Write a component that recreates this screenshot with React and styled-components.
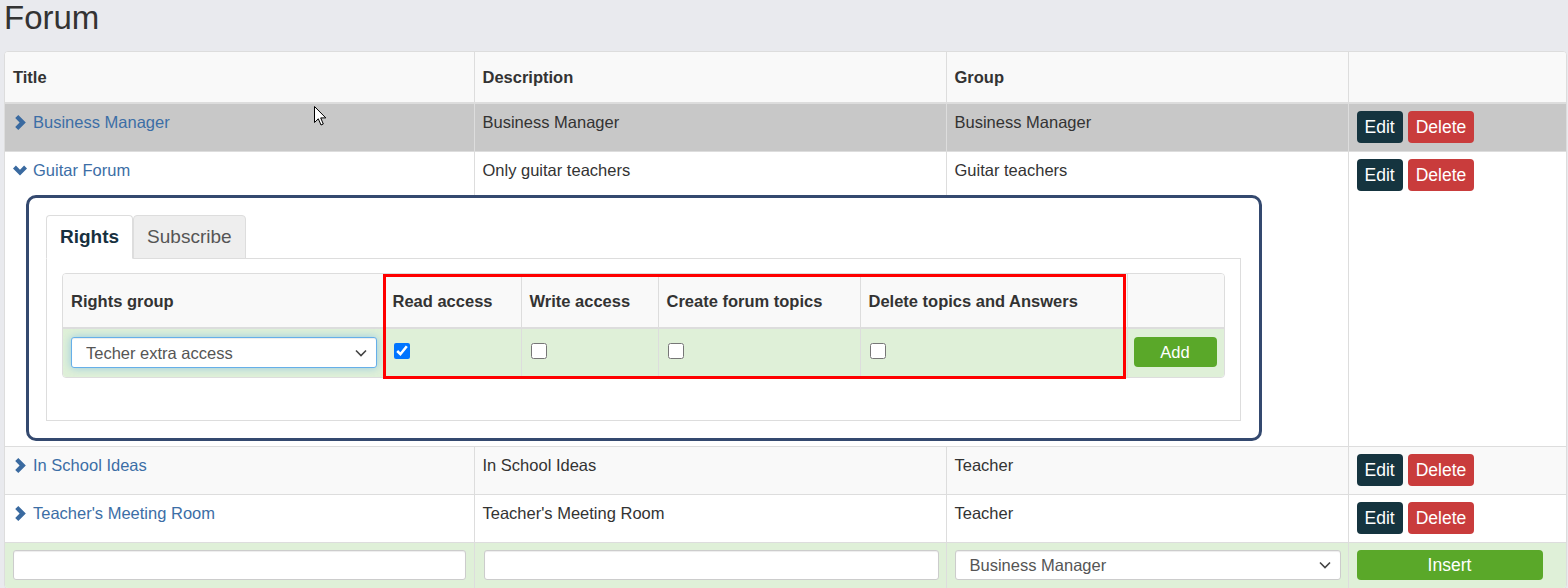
import React from "react";
import styled, { createGlobalStyle } from "styled-components";

const GlobalStyle = createGlobalStyle`
  body {
    margin: 0;
    background: #e9eaee;
    font-family: "Liberation Sans", Arial, sans-serif;
    font-size: 16.5px;
    color: #333;
  }
`;

const Page = styled.div`
  position: relative;
  padding: 0 1px 0 4px;
  height: 588px;
  overflow: hidden;
`;

const Heading = styled.h1`
  margin: 0 0 15px;
  font-size: 33px;
  line-height: 36px;
  font-weight: normal;
  color: #333;
`;

const TableWrap = styled.div`
  border: 1px solid #ddd;
  border-radius: 4px;
  overflow: hidden;
  background: #fff;
`;

const Table = styled.table`
  width: 100%;
  border-collapse: collapse;
  border-style: hidden;
  table-layout: fixed;
`;

const Th = styled.th`
  text-align: left;
  font-weight: bold;
  padding: ${(p) => p.$pad || "14px 8px"};
  line-height: 22px;
  background: #f9f9f9;
  border: 1px solid #ddd;
  border-bottom-width: 2px;
`;

const Row = styled.tr`
  background: ${(p) => p.$bg || "#fff"};
`;

const Td = styled.td`
  padding: ${(p) => p.$pad || "7px 8px 8px"};
  line-height: 22px;
  vertical-align: top;
  border: 1px solid #ddd;
  ${(p) => p.$openTop && "border-top-style: hidden;"}
  ${(p) => p.$openBottom && "border-bottom-style: hidden;"}
`;

const TitleLink = styled.a`
  display: flex;
  align-items: center;
  gap: 6px;
  color: #3c6ea6;
  text-decoration: none;
`;

const IconBox = styled.span`
  width: 14px;
  display: flex;
  justify-content: center;
  align-items: center;
`;

const Actions = styled.div`
  display: flex;
  gap: 5px;
`;

const Btn = styled.button`
  height: ${(p) => p.$h || 32}px;
  padding: 0 8px;
  border: none;
  border-radius: 4px;
  color: #fff;
  font-family: inherit;
  font-size: ${(p) => p.$fs || 17.5}px;
  background: ${(p) => p.$bg};
  width: ${(p) => (p.$w ? `${p.$w}px` : "auto")};
  cursor: pointer;
`;

const DetailBox = styled.div`
  border: 3px solid #34496f;
  border-radius: 10px;
  padding: 17px 18px 17px 17px;
`;

const TabBar = styled.div`
  display: flex;
`;

const Tab = styled.div`
  position: relative;
  z-index: 1;
  padding: 10px 13px;
  line-height: 22px;
  font-size: 19px;
  margin-bottom: -1px;
  border: 1px solid #ddd;
  border-radius: 4px 4px 0 0;
  ${(p) =>
    p.$active
      ? "background: #fff; border-bottom-color: #fff; font-weight: bold; color: #17303f;"
      : "background: #eee; color: #555;"}
`;

const TabPanel = styled.div`
  border: 1px solid #ddd;
  padding: 14px 15px 42px;
`;

const RightsArea = styled.div`
  position: relative;
`;

const RightsWrap = styled.div`
  border: 1px solid #ddd;
  border-radius: 4px;
  overflow: hidden;
`;

const Highlight = styled.div`
  position: absolute;
  left: 321px;
  top: 1px;
  width: 743px;
  height: 105px;
  border: 3px solid #f00;
  box-sizing: border-box;
  pointer-events: none;
`;

const Check = styled.input.attrs({ type: "checkbox" })`
  width: 16px;
  height: 16px;
  margin: 6px 0 0 1px;
`;

const SelectWrap = styled.div`
  position: relative;
  width: ${(p) => p.$w}px;
`;

const Select = styled.select`
  appearance: none;
  width: 100%;
  height: ${(p) => p.$h || 30}px;
  padding: 0 14px;
  font-family: inherit;
  font-size: 16.5px;
  color: #555;
  background: #fff;
  border: 1px solid ${(p) => (p.$focus ? "#66afe9" : "#ccc")};
  border-radius: 3px;
  box-shadow: ${(p) =>
    p.$focus
      ? "inset 0 1px 1px rgba(0,0,0,.075), 0 0 8px rgba(102,175,233,.6)"
      : "inset 0 1px 1px rgba(0,0,0,.075)"};
  outline: none;
`;

const Caret = styled.svg`
  position: absolute;
  right: 10px;
  top: 50%;
  transform: translateY(-50%);
  pointer-events: none;
`;

const TextInput = styled.input`
  box-sizing: border-box;
  width: 100%;
  height: 30px;
  border: 1px solid #ccc;
  border-radius: 3px;
  box-shadow: inset 0 1px 1px rgba(0, 0, 0, 0.075);
  background: #fff;
`;

const Cursor = styled.svg`
  position: absolute;
  left: 314px;
  top: 106px;
`;

const ChevronRight = () => (
  <svg width="11" height="15" viewBox="0 0 11 15">
    <path d="M3.3 0 L10.8 7.5 L3.3 15 L0.2 11.9 L4.6 7.5 L0.2 3.1 Z" fill="#3a6aa0" />
  </svg>
);

const ChevronDown = () => (
  <svg width="15" height="11" viewBox="0 0 15 11">
    <path d="M0 3.3 L3.1 0.2 L7.5 4.6 L11.9 0.2 L15 3.3 L7.5 10.8 Z" fill="#3a6aa0" />
  </svg>
);

const SelectBox = ({ value, w, h, focus }) => (
  <SelectWrap $w={w}>
    <Select $h={h} $focus={focus} defaultValue={value}>
      <option>{value}</option>
    </Select>
    <Caret width="12" height="8" viewBox="0 0 12 8">
      <path d="M1 1.5 L6 6.5 L11 1.5" fill="none" stroke="#444" strokeWidth="1.6" />
    </Caret>
  </SelectWrap>
);

const EditDelete = () => (
  <Actions>
    <Btn $bg="#15343f">Edit</Btn>
    <Btn $bg="#c93c3c">Delete</Btn>
  </Actions>
);

const forums = [
  { title: "Business Manager", desc: "Business Manager", group: "Business Manager", bg: "#c8c8c8" },
  { title: "Guitar Forum", desc: "Only guitar teachers", group: "Guitar teachers", open: true },
  { title: "In School Ideas", desc: "In School Ideas", group: "Teacher", bg: "#f9f9f9" },
  { title: "Teacher's Meeting Room", desc: "Teacher's Meeting Room", group: "Teacher" },
];

const rightsCols = ["Rights group", "Read access", "Write access", "Create forum topics", "Delete topics and Answers", ""];

function RightsPanel() {
  return (
    <DetailBox>
      <TabBar>
        <Tab $active>Rights</Tab>
        <Tab>Subscribe</Tab>
      </TabBar>
      <TabPanel>
        <RightsArea>
          <RightsWrap>
            <Table>
              <colgroup>
                <col style={{ width: 321 }} />
                <col style={{ width: 137 }} />
                <col style={{ width: 137 }} />
                <col style={{ width: 202 }} />
                <col style={{ width: 267 }} />
                <col />
              </colgroup>
              <thead>
                <tr>
                  {rightsCols.map((c, i) => (
                    <Th key={i} $pad="16px 8px 15px">{c}</Th>
                  ))}
                </tr>
              </thead>
              <tbody>
                <Row $bg="#dff0d8">
                  <Td $pad="8px 6px 9px 8px">
                    <SelectBox value="Techer extra access" w={306} h={31} focus />
                  </Td>
                  <Td $pad="8px"><Check defaultChecked /></Td>
                  <Td $pad="8px"><Check /></Td>
                  <Td $pad="8px"><Check /></Td>
                  <Td $pad="8px"><Check /></Td>
                  <Td $pad="8px 8px 9px 6px">
                    <Btn $bg="#5aa829" $h={30} $w={83} $fs={16.5}>Add</Btn>
                  </Td>
                </Row>
              </tbody>
            </Table>
          </RightsWrap>
          <Highlight />
        </RightsArea>
      </TabPanel>
    </DetailBox>
  );
}

export default function App() {
  return (
    <>
      <GlobalStyle />
      <Page>
        <Heading>Forum</Heading>
        <TableWrap>
          <Table>
            <colgroup>
              <col style={{ width: 469 }} />
              <col style={{ width: 472 }} />
              <col style={{ width: 402 }} />
              <col />
            </colgroup>
            <thead>
              <tr>
                <Th>Title</Th>
                <Th>Description</Th>
                <Th>Group</Th>
                <Th />
              </tr>
            </thead>
            <tbody>
              {forums.map((f) => (
                <React.Fragment key={f.title}>
                  <Row $bg={f.bg}>
                    <Td $pad={f.open ? "7px 8px 14px" : undefined} $openBottom={f.open}>
                      <TitleLink href="#">
                        <IconBox>{f.open ? <ChevronDown /> : <ChevronRight />}</IconBox>
                        {f.title}
                      </TitleLink>
                    </Td>
                    <Td $pad={f.open ? "7px 8px 14px" : undefined} $openBottom={f.open}>{f.desc}</Td>
                    <Td $pad={f.open ? "7px 8px 14px" : undefined} $openBottom={f.open}>{f.group}</Td>
                    <Td rowSpan={f.open ? 2 : 1}>
                      <EditDelete />
                    </Td>
                  </Row>
                  {f.open && (
                    <Row>
                      <Td colSpan={3} $pad="0 86px 5px 21px" $openTop>
                        <RightsPanel />
                      </Td>
                    </Row>
                  )}
                </React.Fragment>
              ))}
              <Row $bg="#dff0d8">
                <Td $pad="7px 8px 8px"><TextInput /></Td>
                <Td $pad="7px 7px 8px 9px"><TextInput /></Td>
                <Td><SelectBox value="Business Manager" w={386} /></Td>
                <Td>
                  <Btn $bg="#5aa829" $h={30} $w={186} $fs={17.5}>Insert</Btn>
                </Td>
              </Row>
            </tbody>
          </Table>
        </TableWrap>
        <Cursor width="13" height="21" viewBox="0 0 13 21">
          <path
            d="M0.5 0.5 L0.5 16.5 L4.3 12.8 L7 19 L9.3 18 L6.7 11.9 L11.8 11.9 Z"
            fill="#fff"
            stroke="#000"
            strokeWidth="1"
          />
        </Cursor>
      </Page>
    </>
  );
}
